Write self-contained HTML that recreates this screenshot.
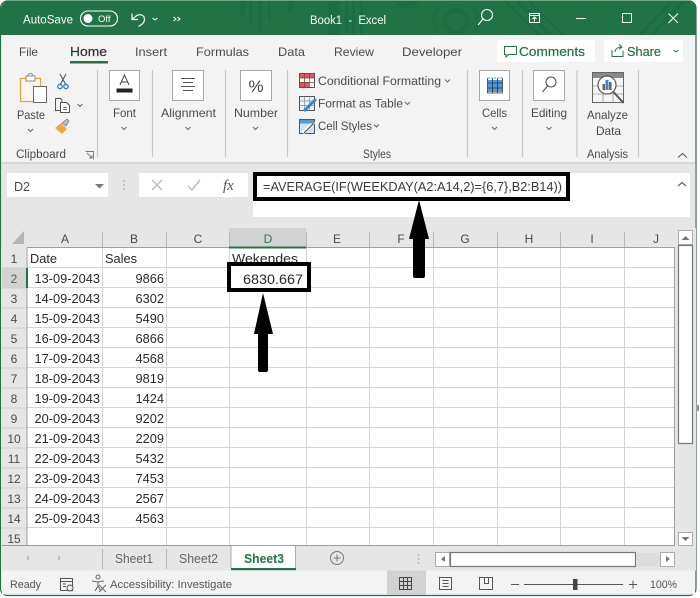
<!DOCTYPE html>
<html><head><meta charset="utf-8"><style>
html,body{margin:0;padding:0;background:#fff;width:700px;height:598px;overflow:hidden}
svg{display:block}
text{font-family:"Liberation Sans",sans-serif;fill:#4a4a4a;font-size:12px}
.t{fill:#fff}
.c{font-size:12.8px;fill:#2a2a2a}
.h{font-size:12px;fill:#4a4a4a;text-anchor:middle}
.m{text-anchor:middle}
.e{text-anchor:end}
.chev{fill:none;stroke:#666;stroke-width:1}
.box{fill:#fff;stroke:#a8a8a8;stroke-width:1}
</style></head><body>
<svg width="700" height="598" viewBox="0 0 700 598" xmlns="http://www.w3.org/2000/svg">
<defs><clipPath id="tb"><rect x="1" y="1" width="695" height="34"/></clipPath></defs>
<!-- window -->
<rect x="0.5" y="1" width="695.5" height="594.5" rx="7" fill="#f3f3f3" stroke="#217346" stroke-width="1.2"/>
<path d="M1 35V9a8 8 0 0 1 8-8H688a8 8 0 0 1 8 8V35Z" fill="#217346"/>
<!-- title pattern -->
<g clip-path="url(#tb)">
<g fill="#1e6c41">
<rect x="240" y="1" width="5" height="16"/><rect x="249" y="1" width="4" height="22"/><rect x="258" y="1" width="4" height="30"/><rect x="268" y="1" width="3" height="20"/><rect x="288" y="1" width="5" height="12"/>
<rect x="328" y="1" width="12" height="34"/><rect x="345" y="1" width="3" height="34"/><rect x="352" y="1" width="3" height="34"/><rect x="360" y="1" width="3" height="34"/>
<path d="M395 1h25a14 14 0 0 1-25 0Z"/>
</g>
<circle cx="456" cy="21" r="11" fill="none" stroke="#1e6c41" stroke-width="5"/>
<circle cx="456" cy="21" r="22" fill="none" stroke="#1f6f43" stroke-width="4"/>
<path d="M505 1L539 35M517 1L551 35M529 1L563 35M640 35L672 1M652 35L684 1" stroke="#1e6c41" stroke-width="3" fill="none"/>
</g>
<!-- QAT -->
<text x="23" y="23.5" class="t" style="font-size:12.3px" textLength="50" lengthAdjust="spacingAndGlyphs">AutoSave</text>
<rect x="80.5" y="11" width="37" height="15" rx="7.5" fill="none" stroke="#fff" stroke-width="1.1"/>
<circle cx="88" cy="18.5" r="4.5" fill="#fff"/>
<text x="98" y="22" class="t" style="font-size:9.5px">Off</text>
<path d="M132 13.5v6h6M132.5 19.5c3-4 6.500-5.500 9-4.500 4 1.500 4 6.500 0 9.500l-3 2" fill="none" stroke="#fff" stroke-width="1.200"/>
<path d="M152.500 18l2.500 2 2.500-2" fill="none" stroke="#fff"/>
<path d="M173.500 17l2.500 2-2.500 2M177.500 17l2.500 2-2.500 2" fill="none" stroke="#fff"/>
<text x="310" y="24" class="t" style="font-size:12.200px" textLength="76" lengthAdjust="spacingAndGlyphs" xml:space="preserve">Book1  -  Excel</text>
<!-- window controls -->
<circle cx="487" cy="15" r="5.500" fill="none" stroke="#fff" stroke-width="1.100"/><path d="M483 19l-5 6" stroke="#fff" stroke-width="1.100"/>
<rect x="529.500" y="13.500" width="10" height="9" fill="none" stroke="#fff"/><path d="M529.500 15.500h10" stroke="#fff"/><path d="M534.500 21.500v-4M532.500 19l2-2 2 2" stroke="#fff" fill="none"/>
<path d="M576 18.500h10" stroke="#fff"/>
<rect x="622.500" y="13.500" width="9" height="9" fill="none" stroke="#fff"/>
<path d="M668.500 13.500l9.500 9.500M678 13.500l-9.500 9.500" stroke="#fff"/>
<!-- tabs -->
<text x="19" y="56" textLength="19" lengthAdjust="spacingAndGlyphs">File</text>
<text x="70" y="56" style="font-size:12.800px;fill:#333;stroke:#333;stroke-width:.25" textLength="37" lengthAdjust="spacingAndGlyphs">Home</text>
<text x="135" y="56" textLength="32" lengthAdjust="spacingAndGlyphs">Insert</text>
<text x="196" y="56" textLength="53" lengthAdjust="spacingAndGlyphs">Formulas</text>
<text x="278" y="56" textLength="27" lengthAdjust="spacingAndGlyphs">Data</text>
<text x="334" y="56" textLength="40" lengthAdjust="spacingAndGlyphs">Review</text>
<text x="402" y="56" textLength="60" lengthAdjust="spacingAndGlyphs">Developer</text>
<rect x="70" y="61" width="38" height="2.500" fill="#217346"/>
<rect x="497" y="40" width="98" height="22" fill="#fff"/>
<path d="M504.500 46.500h12v8h-8l-2.500 2.500v-2.500h-1.500z" fill="none" stroke="#217346"/>
<text x="519" y="56" style="font-size:12.500px;fill:#217346;stroke:#217346;stroke-width:.2" textLength="66" lengthAdjust="spacingAndGlyphs">Comments</text>
<rect x="604" y="40" width="79" height="22" fill="#fff"/>
<path d="M612 50v6.500h11v-6M615 52c0-3 3-5 6-5M619 44.500l3 2.500-3 2.500" fill="none" stroke="#217346"/>
<text x="627" y="56" style="font-size:12.500px;fill:#217346;stroke:#217346;stroke-width:.2" textLength="34" lengthAdjust="spacingAndGlyphs">Share</text>
<path d="M673.500 50l2.500 2 2.500-2" fill="none" stroke="#217346"/>
<!-- ribbon separators -->
<g stroke="#c6c6c6" stroke-width="1.200">
<path d="M97.500 70v87M152.500 70v87M225.500 70v87M287.500 70v87M467.500 70v87M522.500 70v87M577 70v87M638.500 70v87"/>
</g>
<!-- clipboard -->
<rect x="20.500" y="78.500" width="20" height="23" fill="#fbf7ef" stroke="#e3a34b" stroke-width="1.300"/>
<rect x="26" y="76" width="9" height="5" fill="#fff" stroke="#888"/>
<path d="M28 76a2.500 2.500 0 0 1 5 0" fill="none" stroke="#888"/>
<rect x="33.500" y="86.500" width="13" height="16" fill="#fff" stroke="#666"/>
<text x="31" y="119" class="m" style="font-size:12px" textLength="28" lengthAdjust="spacingAndGlyphs">Paste</text>
<path class="chev" d="M28 129l2.500 2.500 2.500-2.500"/>
<path d="M60 74l6 11M66 74l-6 11" stroke="#555" stroke-width="1.100"/>
<circle cx="60" cy="86.500" r="2.200" fill="none" stroke="#2b7cd3" stroke-width="1.300"/><circle cx="66" cy="86.500" r="2.200" fill="none" stroke="#2b7cd3" stroke-width="1.300"/>
<path d="M55.500 98.500h5l1.500 1.500v3" fill="none" stroke="#555"/><path d="M55.500 98.500v12h5" fill="none" stroke="#555"/>
<path d="M60.500 102.500h6l3 3v7h-9z" fill="#fff" stroke="#555"/>
<path d="M63 107.500h4M63 109.500h4" stroke="#777"/>
<path class="chev" d="M77.500 104l2.500 2.500 2.500-2.500"/>
<path d="M55 128l6-5 6 6-5 5z" fill="#f0a83f"/>
<path d="M62 123l5-4 2 2-3 5z" fill="#bbb" stroke="#777" stroke-width=".7"/>
<text x="16" y="158" textLength="50" lengthAdjust="spacingAndGlyphs" style="font-size:11.500px">Clipboard</text>
<path d="M85.500 151.500h8v8M87 153l5 5M92 155v3h-3" fill="none" stroke="#777" stroke-width=".9"/>
<!-- Font -->
<rect class="box" x="109.500" y="70.500" width="30" height="30"/>
<path d="M120 85l4.500-10 4.500 10M121.500 82h6" fill="none" stroke="#444" stroke-width="1"/>
<rect x="116.500" y="88.500" width="16" height="4" fill="#222"/>
<text x="113" y="117" textLength="23" lengthAdjust="spacingAndGlyphs">Font</text>
<path class="chev" d="M121.500 127l2.500 2.500 2.500-2.500"/>
<!-- Alignment -->
<rect class="box" x="172.500" y="70.500" width="31" height="30"/>
<path d="M181 78.500h14M183 82.500h10M181 86.500h14M183 90.500h10" stroke="#555" stroke-width="1"/>
<text x="161" y="117" textLength="55" lengthAdjust="spacingAndGlyphs">Alignment</text>
<path class="chev" d="M185.500 127l2.500 2.500 2.500-2.500"/>
<!-- Number -->
<rect class="box" x="240.500" y="70.500" width="31" height="30"/>
<text x="256" y="92" class="m" style="font-size:17px;fill:#444">%</text>
<text x="234" y="117" textLength="44" lengthAdjust="spacingAndGlyphs">Number</text>
<path class="chev" d="M253 127l2.500 2.500 2.500-2.500"/>
<!-- Styles -->
<rect x="299.500" y="73.500" width="15" height="14" fill="#fff" stroke="#555"/>
<rect x="300" y="74" width="14" height="4" fill="#e6525f"/><rect x="300" y="82" width="9" height="5" fill="#e6525f"/>
<path d="M299.500 78h15M299.500 82.500h15M304.500 73.500v14M309.500 73.500v14" stroke="#7a3a3a" stroke-width=".7"/>
<text x="318" y="85" textLength="123" lengthAdjust="spacingAndGlyphs" style="font-size:12.200px">Conditional Formatting</text>
<path class="chev" d="M445 79.500l2.500 2.500 2.500-2.500"/>
<rect x="299.500" y="96.500" width="15" height="14" fill="#eef5fb" stroke="#555"/>
<path d="M299.500 101h15M299.500 105.500h15M304.500 96.500v14M309.500 96.500v14" stroke="#6f8aa0" stroke-width=".7"/>
<path d="M304 111l12-12" stroke="#3f86c9" stroke-width="3"/>
<text x="318" y="107.500" textLength="85" lengthAdjust="spacingAndGlyphs" style="font-size:12.200px">Format as Table</text>
<path class="chev" d="M405 102l2.500 2.500 2.500-2.500"/>
<rect x="299.500" y="119.500" width="15" height="14" fill="#cfe3f5" stroke="#555"/>
<path d="M303 133l11-11" stroke="#fff" stroke-width="3.500"/><path d="M304 133l10-10" stroke="#555" stroke-width="1.200"/>
<rect x="300" y="120" width="14" height="3.500" fill="#5a9bd4"/>
<text x="318" y="130" textLength="54" lengthAdjust="spacingAndGlyphs" style="font-size:12.200px">Cell Styles</text>
<path class="chev" d="M374 124.500l2.500 2.500 2.500-2.500"/>
<text x="377" y="158" class="m" style="font-size:11.500px" textLength="28" lengthAdjust="spacingAndGlyphs">Styles</text>
<!-- Cells -->
<rect class="box" x="479.500" y="70.500" width="30" height="30"/>
<rect x="488" y="80" width="14" height="12" fill="#4a9be0"/>
<path d="M487.500 78v15h15v-15M487.500 83h15M487.500 88h15M492.500 78v15M497.500 78v15" fill="none" stroke="#333" stroke-width=".8"/>
<path d="M488 78h14" stroke="#4a9be0" stroke-dasharray="2 1"/>
<text x="482" y="117" textLength="25" lengthAdjust="spacingAndGlyphs">Cells</text>
<path class="chev" d="M492 127l2.500 2.500 2.500-2.500"/>
<!-- Editing -->
<rect class="box" x="533.500" y="70.500" width="31" height="30"/>
<circle cx="551" cy="82" r="5" fill="none" stroke="#555" stroke-width="1.100"/><path d="M547.500 86l-5 6" stroke="#555" stroke-width="1.100"/>
<text x="531" y="117" textLength="36" lengthAdjust="spacingAndGlyphs">Editing</text>
<path class="chev" d="M546.500 127l2.500 2.500 2.500-2.500"/>
<!-- Analyze -->
<rect x="592.500" y="72.500" width="31" height="30" fill="#f6f6f6" stroke="#666"/>
<rect x="593" y="73" width="30" height="5" fill="#8a8a8a"/>
<path d="M593 86h30M593 94h30M603 78v24M613 78v24" stroke="#999" stroke-width=".8"/>
<circle cx="607" cy="85" r="9" fill="#fff" stroke="#555" stroke-width="1.200"/>
<rect x="602.500" y="84" width="2.500" height="6" fill="#666"/><rect x="605.500" y="80" width="3" height="10" fill="#3a8ad0"/><rect x="609" y="82" width="2.500" height="8" fill="#666"/>
<path d="M613.500 92l10 11" stroke="#555" stroke-width="2"/>
<text x="587" y="119" textLength="41" lengthAdjust="spacingAndGlyphs">Analyze</text>
<text x="596" y="135" textLength="25" lengthAdjust="spacingAndGlyphs">Data</text>
<text x="587" y="158" style="font-size:11.500px" textLength="41" lengthAdjust="spacingAndGlyphs">Analysis</text>
<path d="M678 157.500l4.500-4 4.500 4" fill="none" stroke="#555" stroke-width="1.100"/>
<!-- formula area -->
<rect x="1.500" y="162" width="694" height="5" fill="#d8d8d8"/>
<rect x="1.500" y="164" width="694" height="84" fill="#e6e6e6"/>
<rect x="7" y="173" width="101" height="24" fill="#fff"/>
<text x="14" y="191" style="font-size:12.500px">D2</text>
<path d="M95 184h9l-4.500 4.500z" fill="#777"/>
<circle cx="124" cy="181" r=".9" fill="#aaa"/><circle cx="124" cy="185" r=".9" fill="#aaa"/><circle cx="124" cy="189" r=".9" fill="#aaa"/>
<rect x="139" y="173" width="109" height="24" fill="#fff"/>
<path d="M152 180l10 10M162 180l-10 10" stroke="#bdbdbd" stroke-width="1.500"/>
<path d="M188 186l4 4 8-10" stroke="#bdbdbd" stroke-width="1.500" fill="none"/>
<text x="223" y="190" style="font-family:'Liberation Serif',serif;font-style:italic;font-size:15px;fill:#555">fx</text>
<rect x="253" y="173" width="437" height="44" fill="#fff"/>
<text x="263" y="191" style="font-size:13.200px;fill:#3a3a3a" textLength="299" lengthAdjust="spacingAndGlyphs">=AVERAGE(IF(WEEKDAY(A2:A14,2)={6,7},B2:B14))</text>
<path d="M678 186l4-3.500 4 3.500" fill="none" stroke="#666" stroke-width="1.200"/>
<!-- grid -->
<rect x="2" y="228" width="694" height="318" fill="#e6e6e6"/>
<rect x="27" y="248" width="647" height="297" fill="#fff"/>
<rect x="229" y="228" width="77" height="20" fill="#d2d2d2"/>
<rect x="2" y="268" width="25" height="20" fill="#d2d2d2"/>
<path d="M24 231v13h-12z" fill="#b5b5b5"/>
<g stroke="#d4d4d4" stroke-width="1">
<path d="M27 267.500h647M27 287.500h647M27 307.500h647M27 327.500h647M27 347.500h647M27 367.500h647M27 387.500h647M27 407.500h647M27 427.500h647M27 447.500h647M27 467.500h647M27 487.500h647M27 507.500h647M27 527.500h647"/>
<path d="M102.500 248v297M166.500 248v297M229.500 248v297M306.500 248v297M369.500 248v297M433.500 248v297M497.500 248v297M560.500 248v297M624.500 248v297"/>
</g>
<path d="M2 268h25M2 288h25M2 308h25M2 328h25M2 348h25M2 368h25M2 388h25M2 408h25M2 428h25M2 448h25M2 468h25M2 488h25M2 508h25M2 528h25" stroke="#c8c8c8" stroke-width=".8"/>
<path d="M102.500 232v16M166.500 232v16M229.500 232v16M306.500 232v16M369.500 232v16M433.500 232v16M497.500 232v16M560.500 232v16M624.500 232v16" stroke="#b8b8b8"/>
<path d="M27 247.500h647M27 248v297M674.500 247v299M2 545.500h672.500" stroke="#9e9e9e" stroke-width="1" fill="none"/>
<rect x="229" y="246.500" width="77" height="2" fill="#217346"/>
<rect x="26" y="268" width="2" height="20" fill="#217346"/>
<!-- headers -->
<g>
<text x="65" y="243" class="h">A</text><text x="134" y="243" class="h">B</text><text x="198" y="243" class="h">C</text><text x="268" y="243" class="h" style="fill:#3f6b52">D</text><text x="337" y="243" class="h">E</text><text x="401" y="243" class="h">F</text><text x="465" y="243" class="h">G</text><text x="529" y="243" class="h">H</text><text x="592" y="243" class="h">I</text><text x="656" y="243" class="h">J</text>
<text x="14" y="263" class="h">1</text><text x="14" y="283" class="h" style="fill:#3f6b52">2</text><text x="14" y="303" class="h">3</text><text x="14" y="323" class="h">4</text><text x="14" y="343" class="h">5</text><text x="14" y="363" class="h">6</text><text x="14" y="383" class="h">7</text><text x="14" y="403" class="h">8</text><text x="14" y="423" class="h">9</text><text x="14" y="443" class="h">10</text><text x="14" y="463" class="h">11</text><text x="14" y="483" class="h">12</text><text x="14" y="503" class="h">13</text><text x="14" y="523" class="h">14</text><text x="14" y="543" class="h">15</text>
</g>
<text x="30" y="263" class="c">Date</text><text x="105" y="263" class="c">Sales</text>
<g>
<text x="100" y="283" class="c e">13-09-2043</text><text x="100" y="303" class="c e">14-09-2043</text><text x="100" y="323" class="c e">15-09-2043</text><text x="100" y="343" class="c e">16-09-2043</text><text x="100" y="363" class="c e">17-09-2043</text><text x="100" y="383" class="c e">18-09-2043</text><text x="100" y="403" class="c e">19-09-2043</text><text x="100" y="423" class="c e">20-09-2043</text><text x="100" y="443" class="c e">21-09-2043</text><text x="100" y="463" class="c e">22-09-2043</text><text x="100" y="483" class="c e">23-09-2043</text><text x="100" y="503" class="c e">24-09-2043</text><text x="100" y="523" class="c e">25-09-2043</text>
<text x="164" y="283" class="c e">9866</text><text x="164" y="303" class="c e">6302</text><text x="164" y="323" class="c e">5490</text><text x="164" y="343" class="c e">6866</text><text x="164" y="363" class="c e">4568</text><text x="164" y="383" class="c e">9819</text><text x="164" y="403" class="c e">1424</text><text x="164" y="423" class="c e">9202</text><text x="164" y="443" class="c e">2209</text><text x="164" y="463" class="c e">5432</text><text x="164" y="483" class="c e">7453</text><text x="164" y="503" class="c e">2567</text><text x="164" y="523" class="c e">4563</text>
</g>
<text x="232" y="263" class="c" textLength="66" lengthAdjust="spacingAndGlyphs">Wekendes</text>
<rect x="229" y="264" width="80" height="26" fill="#fff" stroke="#000" stroke-width="4"/>
<text x="243" y="284" class="c" textLength="60" lengthAdjust="spacingAndGlyphs" style="font-size:14px">6830.667</text>
<!-- formula highlight -->
<rect x="255" y="174" width="313" height="25" fill="none" stroke="#000" stroke-width="4"/>
<!-- arrows -->
<path d="M419 200l10 39h-4v37a2 2 0 0 1-2 2h-8a2 2 0 0 1-2-2v-37h-4z" fill="#000"/>
<path d="M263 293l10 41h-5v36a2 2 0 0 1-2 2h-6a2 2 0 0 1-2-2v-36h-4z" fill="#000"/>
<!-- v scrollbar -->
<rect x="678.500" y="230.500" width="14" height="14" fill="#fff" stroke="#ababab"/>
<path d="M681.500 240l4-4 4 4z" fill="#777"/>
<rect x="678.500" y="245.500" width="14" height="198" fill="#fff" stroke="#777" stroke-width="1.200"/>
<rect x="678.500" y="532.500" width="14" height="13" fill="#fff" stroke="#ababab"/>
<path d="M681.500 537l4 4 4-4z" fill="#777"/>
<!-- sheet tabs -->
<rect x="2" y="546" width="694" height="24.500" fill="#e6e6e6"/>
<path d="M29 555v6l-3-3zM58 555v6l3-3z" fill="#bdbdbd"/>
<path d="M102.500 549v20M166.500 549v20" stroke="#b5b5b5"/>
<text x="115" y="563" style="fill:#666;font-size:12.500px" textLength="38" lengthAdjust="spacingAndGlyphs">Sheet1</text>
<text x="179" y="563" style="fill:#666;font-size:12.500px" textLength="39" lengthAdjust="spacingAndGlyphs">Sheet2</text>
<rect x="231" y="546" width="64" height="22" fill="#fff"/>
<path d="M231 546v22M295.500 546v22" stroke="#aaa" fill="none"/>
<rect x="231" y="568" width="65" height="2.200" fill="#217346"/>
<text x="244" y="563" style="fill:#217346;font-size:12.500px;font-weight:bold" textLength="40" lengthAdjust="spacingAndGlyphs">Sheet3</text>
<circle cx="337" cy="558" r="6.500" fill="none" stroke="#777"/><path d="M333.500 558h7M337 554.500v7" stroke="#777"/>
<circle cx="418.500" cy="555" r=".9" fill="#aaa"/><circle cx="418.500" cy="559" r=".9" fill="#aaa"/><circle cx="418.500" cy="563" r=".9" fill="#aaa"/>
<rect x="435.500" y="552.500" width="14" height="14" fill="#fff" stroke="#ababab"/>
<path d="M445 556v6l-4-3z" fill="#777"/>
<rect x="450.500" y="552.500" width="185" height="14" fill="#fff" stroke="#777" stroke-width="1.200"/>
<rect x="636" y="553" width="24" height="13" fill="#dcdcdc"/>
<rect x="660.500" y="552.500" width="14" height="14" fill="#fff" stroke="#ababab"/>
<path d="M666 556v6l4-3z" fill="#777"/>
<!-- status -->
<rect x="2" y="570.500" width="693" height="24" fill="#f3f3f3"/>
<text x="10" y="588" style="font-size:11px;fill:#555" textLength="31" lengthAdjust="spacingAndGlyphs">Ready</text>
<rect x="60.500" y="578.500" width="12" height="12" fill="none" stroke="#555"/><path d="M61 581.500h11M63 584h3M63 586.500h3" stroke="#555"/><circle cx="70" cy="588" r="3" fill="#f3f3f3" stroke="#555"/>
<circle cx="98" cy="577" r="2" fill="none" stroke="#666"/><path d="M92 581l6 1 6-1M98 582v4l-3 5M98 586l3 5" fill="none" stroke="#666"/><path d="M99 585l7 7M106 585l-7 7" stroke="#666"/>
<text x="110" y="588" style="font-size:11px;fill:#555" textLength="122" lengthAdjust="spacingAndGlyphs">Accessibility: Investigate</text>
<rect x="387" y="570.500" width="39" height="24" fill="#d2d2d2"/>
<rect x="399.500" y="577.500" width="12" height="12" fill="none" stroke="#444"/><path d="M403.500 577.500v12M407.500 577.500v12M399.500 581.500h12M399.500 585.500h12" stroke="#444"/>
<rect x="439.500" y="577.500" width="12" height="12" fill="none" stroke="#555"/><path d="M442.500 580.500h6M442.500 583.500h6M442.500 586.500h6" stroke="#555"/>
<path d="M479.500 577.500h13v12h-13zM484.500 577.500v6h4v-6" fill="none" stroke="#555"/>
<path d="M511 584.500h8M524 584.500h99M629 584.500h8M633 580.500v8" stroke="#555"/>
<rect x="573" y="579" width="4.500" height="11" fill="#444"/>
<text x="650" y="588" style="font-size:11px;fill:#555" textLength="27" lengthAdjust="spacingAndGlyphs">100%</text>
<rect x="697.500" y="405" width="1.200" height="6" fill="#555"/>
</svg>
</body></html>
